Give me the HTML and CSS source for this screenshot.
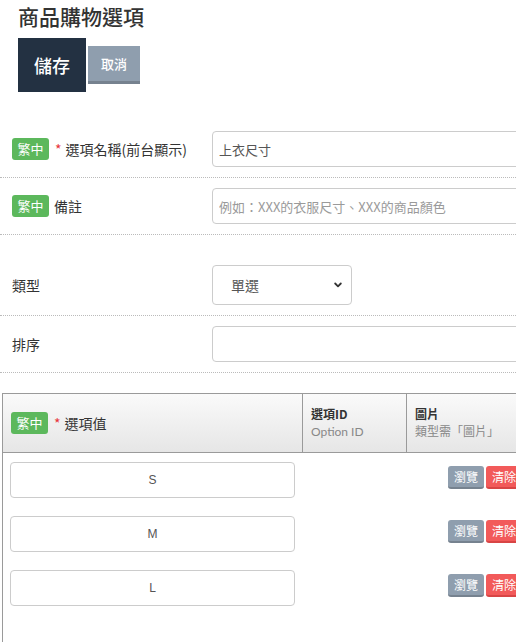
FILE: index.html
```html
<!DOCTYPE html>
<html lang="zh-Hant">
<head>
<meta charset="utf-8">
<title>商品購物選項</title>
<link rel="stylesheet" href="styles.css">
</head>
<body>
<div class="page">
  <h1 class="title">商品購物選項</h1>
  <div class="actions">
    <button class="btn-save">儲存</button>
    <button class="btn-cancel">取消</button>
  </div>

  <div class="form">
    <div class="row">
      <div class="label"><span class="badge">繁中</span><span class="req">*</span>選項名稱(前台顯示)</div>
      <div class="field"><input class="input" type="text" value="上衣尺寸"></div>
    </div>
    <div class="row">
      <div class="label"><span class="badge">繁中</span>備註</div>
      <div class="field"><input class="input" type="text" placeholder="例如：XXX的衣服尺寸、XXX的商品顏色"></div>
    </div>
    <div class="row row-gap">
      <div class="label">類型</div>
      <div class="field">
        <div class="select">
          <span>單選</span>
          <svg class="chev" width="8" height="6" viewBox="0 0 8 6"><path d="M1.2 1.5 L4 4.3 L6.8 1.5" fill="none" stroke="#333" stroke-width="1.8" stroke-linecap="round" stroke-linejoin="round"/></svg>
        </div>
      </div>
    </div>
    <div class="row">
      <div class="label">排序</div>
      <div class="field"><input class="input" type="text"></div>
    </div>
  </div>

  <div class="table">
    <div class="thead">
      <div class="th th-val"><span class="badge">繁中</span><span class="req">*</span>選項值</div>
      <div class="th th-id"><b>選項ID</b><span class="sub">Option ID</span></div>
      <div class="th th-img"><b>圖片</b><span class="sub">類型需「圖片」</span></div>
    </div>
    <div class="tr">
      <div class="td td-val"><input class="input center" type="text" value="S"></div>
      <div class="td td-id"></div>
      <div class="td td-img"><button class="btn-sm gray">瀏覽</button><button class="btn-sm red">清除</button></div>
    </div>
    <div class="tr">
      <div class="td td-val"><input class="input center" type="text" value="M"></div>
      <div class="td td-id"></div>
      <div class="td td-img"><button class="btn-sm gray">瀏覽</button><button class="btn-sm red">清除</button></div>
    </div>
    <div class="tr">
      <div class="td td-val"><input class="input center" type="text" value="L"></div>
      <div class="td td-id"></div>
      <div class="td td-img"><button class="btn-sm gray">瀏覽</button><button class="btn-sm red">清除</button></div>
    </div>
  </div>
</div>
</body>
</html>
```
FILE: styles.css
```css
html, body {
  margin: 0;
  padding: 0;
  background: #fff;
  overflow: hidden;
}
body {
  width: 516px;
  font-family: "Lato", "Noto Sans CJK TC", sans-serif;
  color: #333;
  font-size: 14px;
}
.page {
  width: 640px;
}
.title {
  margin: 1px 0 0 0;
  padding-left: 18px;
  font-family: "Noto Sans CJK TC", sans-serif;
  font-size: 21px;
  line-height: 30px;
  font-weight: 500;
  color: #333;
}
.actions {
  display: flex;
  align-items: center;
  gap: 2px;
  padding-left: 18px;
  margin-top: 7px;
}
button {
  font-family: "Noto Sans CJK TC", sans-serif;
  border: 0;
  margin: 0;
  padding: 0;
  cursor: pointer;
}
.btn-save {
  width: 68px;
  height: 54px;
  background: #233142;
  color: #fff;
  font-size: 18px;
  font-weight: 500;
}
.btn-cancel {
  width: 52px;
  height: 38px;
  background: #8f9eae;
  border-bottom: 3px solid #76828f;
  color: #fff;
  font-size: 13px;
  font-weight: 500;
}
.form {
  margin-top: 29px;
}
.row {
  display: flex;
  align-items: center;
  padding: 10px 0;
  border-bottom: 1px dotted #bbb;
}
.row-gap {
  padding-top: 30px;
}
.label {
  flex: 0 0 212px;
  width: 212px;
  padding-left: 12px;
  box-sizing: border-box;
  display: flex;
  align-items: center;
  font-family: "Noto Sans CJK TC", sans-serif;
  font-size: 14px;
  color: #333;
  white-space: nowrap;
}
.field {
  flex: 1;
  min-width: 0;
}
.badge {
  display: inline-block;
  width: 37px;
  height: 22px;
  line-height: 22px;
  text-align: center;
  background: #5cb85c;
  color: #fff;
  border-radius: 3px;
  font-size: 13px;
  font-family: "Noto Sans CJK TC", sans-serif;
  margin-right: 5px;
}
.req {
  color: #e8353b;
  font-size: 14px;
  margin-right: 4px;
  margin-left: 1px;
}
.input {
  display: block;
  width: 100%;
  height: 36px;
  box-sizing: border-box;
  border: 1px solid #ccc;
  border-radius: 4px;
  padding: 0 6px;
  font-family: "Noto Sans CJK TC", sans-serif;
  font-size: 13px;
  color: #555;
  background: #fff;
  outline: none;
}
.input::placeholder {
  color: #9a9a9a;
}
.input.center {
  text-align: center;
  font-family: "Liberation Sans", "Noto Sans CJK TC", sans-serif;
  font-size: 12px;
}
.select {
  width: 140px;
  height: 40px;
  box-sizing: border-box;
  border: 1px solid #ccc;
  border-radius: 4px;
  display: flex;
  align-items: center;
  justify-content: space-between;
  padding: 0 9px 0 18px;
  font-family: "Noto Sans CJK TC", sans-serif;
  font-size: 14px;
  color: #555;
}
.chev {
  display: block;
}
.table {
  margin: 20px 0 0 2px;
  border-left: 1px solid #9a9a9a;
  border-top: 1px solid #9a9a9a;
  width: 620px;
  padding-bottom: 40px;
}
.thead, .tr {
  display: grid;
  grid-template-columns: 299px 104px 1fr;
}
.thead {
  height: 58px;
  border-bottom: 1px solid #9a9a9a;
  background: linear-gradient(#fafafa, #e6e6e6);
}
.th {
  display: flex;
  flex-direction: column;
  justify-content: center;
  padding: 0 8px;
  font-family: "Noto Sans CJK TC", sans-serif;
  font-size: 12px;
  line-height: 18px;
}
.th + .th {
  border-left: 1px solid #9a9a9a;
}
.th-val {
  flex-direction: row;
  justify-content: flex-start;
  align-items: center;
  font-size: 14px;
}
.th b {
  font-weight: 700;
  color: #333;
}
.sub {
  color: #888;
  font-family: "Lato", "Noto Sans CJK TC", sans-serif;
  font-size: 12px;
}
.td {
  padding: 9px 0;
}
.td-val {
  padding-left: 7px;
  padding-right: 7px;
}
.td-img {
  display: flex;
  align-items: flex-start;
  gap: 2px;
  padding-top: 13px;
  padding-left: 42px;
}
.btn-sm {
  width: 36px;
  height: 23px;
  border-radius: 3px;
  color: #fff;
  font-size: 12px;
  line-height: 21px;
  box-sizing: border-box;
}
.btn-sm.gray {
  background: #8f9eae;
  border-bottom: 2px solid #76828f;
}
.btn-sm.red {
  background: #f25a5a;
  border-bottom: 2px solid #d84545;
}
```
